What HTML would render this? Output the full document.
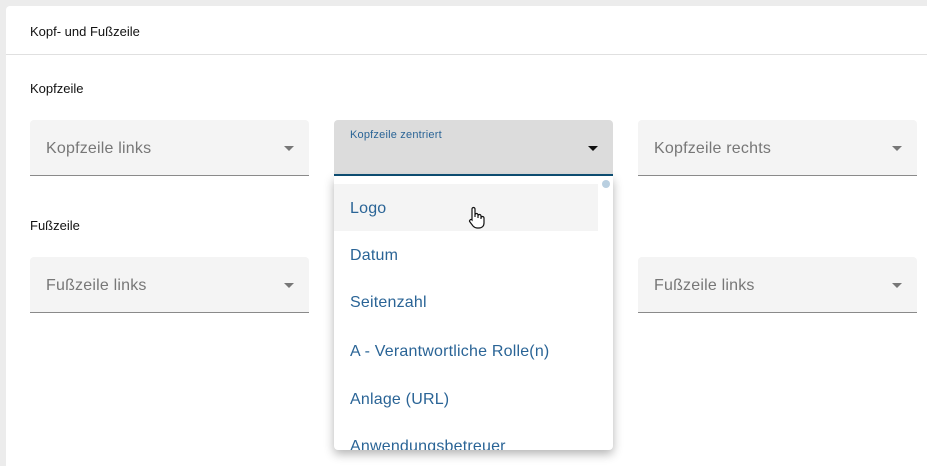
<!DOCTYPE html>
<html><head><style>
html,body{margin:0;width:927px;height:466px;overflow:hidden}
body{background:#ececec;font-family:"Liberation Sans",sans-serif;position:relative}
.card{position:absolute;left:6px;top:6px;width:930px;height:470px;background:#fff;border-radius:4px}
.hdr{position:absolute;left:0;top:0;right:0;height:48px;border-bottom:1px solid #e0e0e0}
.t{position:absolute;font-size:13px;color:#111}
.f{position:absolute;width:279px;height:55px;background:#f4f4f4;border-bottom:1px solid #8a8a8a;border-radius:4px 4px 0 0}
.f span{position:absolute;left:16px;top:20px;font-size:16px;color:#777;letter-spacing:.2px}
.ar{position:absolute;right:15px;top:26px;width:0;height:0;border-left:5px solid transparent;border-right:5px solid transparent;border-top:5px solid #777}
.dd{position:absolute;left:334px;top:176px;width:279px;height:274px;background:#fff;box-shadow:0 4px 10px rgba(0,0,0,.3);border-radius:0 0 4px 4px;overflow:hidden}
.it{position:absolute;left:16px;font-size:16px;color:#2a6496;letter-spacing:.2px}
</style></head><body>
<div class="card"><div class="hdr"></div></div>
<div class="t" style="left:30px;top:24px">Kopf- und Fußzeile</div>
<div class="t" style="left:30px;top:81px">Kopfzeile</div>
<div class="t" style="left:30px;top:218px">Fußzeile</div>
<div class="f" style="left:30px;top:120px"><span>Kopfzeile links</span><div class="ar"></div></div>
<div class="f" style="left:334px;top:120px;background:#dcdcdc;border-bottom:2px solid #0d4f75;height:54px"><span style="font-size:11px;top:9px;color:#2a6496">Kopfzeile zentriert</span><div class="ar" style="border-top-color:#111"></div></div>
<div class="f" style="left:638px;top:120px"><span>Kopfzeile rechts</span><div class="ar"></div></div>
<div class="f" style="left:30px;top:257px"><span>Fußzeile links</span><div class="ar"></div></div>
<div class="f" style="left:638px;top:257px"><span>Fußzeile links</span><div class="ar"></div></div>
<div class="dd">
<div style="position:absolute;left:0;top:8px;width:264px;height:47px;background:#f4f4f4"></div>
<div style="position:absolute;left:268px;top:4px;width:8px;height:8px;border-radius:50%;background:#b9cfe0"></div>
<div class="it" style="top:24px">Logo</div>
<div class="it" style="top:71px">Datum</div>
<div class="it" style="top:118px">Seitenzahl</div>
<div class="it" style="top:167px">A - Verantwortliche Rolle(n)</div>
<div class="it" style="top:215px">Anlage (URL)</div>
<div class="it" style="top:262px">Anwendungsbetreuer</div>
<svg style="position:absolute;left:133px;top:30px" width="20" height="24" viewBox="0 0 20 24"><path d="M5 14V3a1.5 1.5 0 0 1 3 0v8V9a1.5 1.5 0 0 1 3 0v3-2a1.5 1.5 0 0 1 3 0v3-1a1.5 1.5 0 0 1 3 0v5c0 3-2 5-5 5h-2c-2 0-3-1-4-2l-3-4a1.4 1.4 0 0 1 2-2z" fill="#fff" stroke="#111" stroke-width="1.2"/></svg>
</div>
</body></html>
